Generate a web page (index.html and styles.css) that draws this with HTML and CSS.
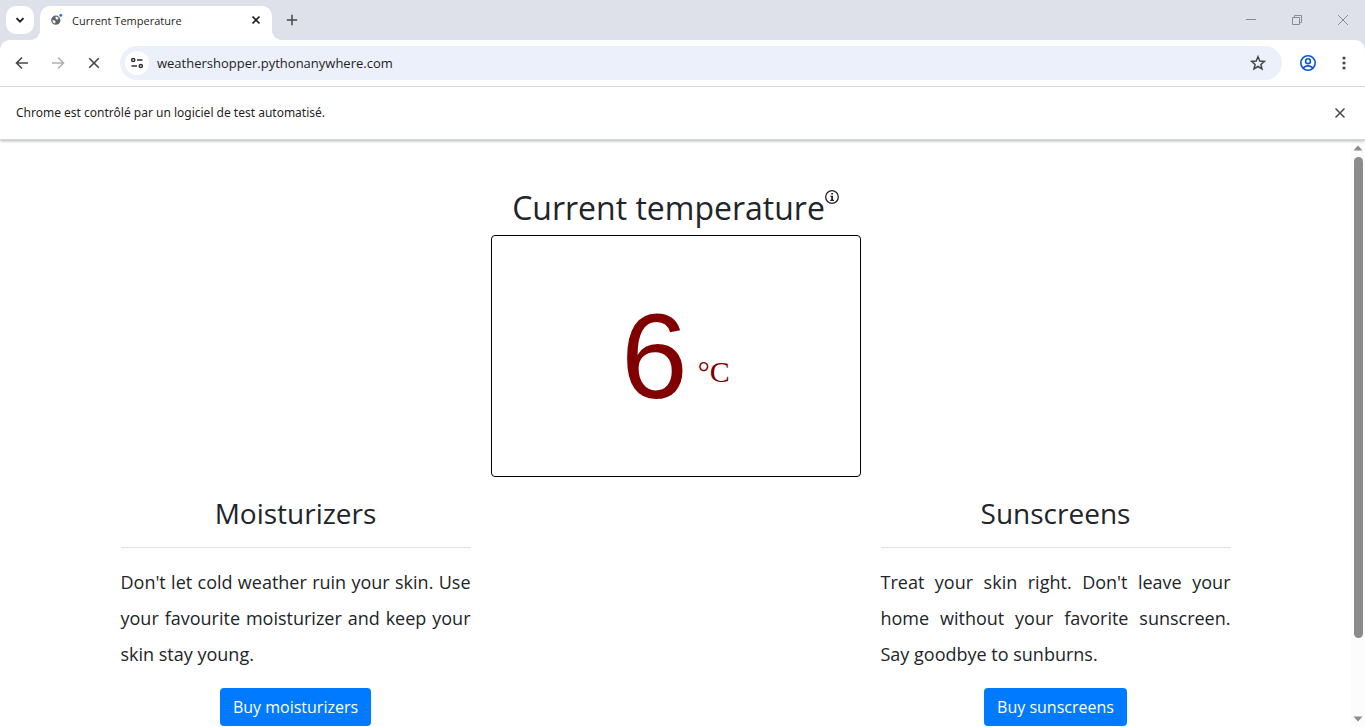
FILE: index.html
```html
<!DOCTYPE html>
<html lang="en">
<head>
<meta charset="utf-8">
<title>Current Temperature</title>
<link rel="stylesheet" href="styles.css">
</head>
<body>
<div class="window">
  <header class="tabstrip">
    <button class="tab-search" aria-label="Search tabs"><svg width="12" height="12" viewBox="0 0 12 12"><path d="M2.500 4.200 6 7.700 9.500 4.200" fill="none" stroke="#1f1f1f" stroke-width="1.900"/></svg></button>
    <div class="tab">
      <svg class="favicon" width="14" height="14" viewBox="0 0 14 14"><circle cx="5.800" cy="7.200" r="4.600" fill="#5f6368"/><path d="M2.400 7.300c1.500-.4 2.600 0 3.100 1 .4 1-.3 1.500-.8 2.300C3.200 10 2.400 8.700 2.400 7.300zM5.300 4c1.300-.6 2.600.1 3.300 1.200L7.300 6.700 6 6.200z" fill="#fff"/><circle cx="10.800" cy="2.400" r="2" fill="#fff"/><circle cx="10.800" cy="2.400" r="1.400" fill="#1a6ee8"/></svg>
      <span class="tab-title">Current Temperature</span>
      <button class="icon-button" aria-label="Close tab"><svg width="10" height="10" viewBox="0 0 10 10"><path d="M1.500 1.500 8.500 8.500M8.500 1.500 1.500 8.500" stroke="#1f1f1f" stroke-width="1.700"/></svg></button>
    </div>
    <button class="icon-button new-tab" aria-label="New tab"><svg width="12" height="12" viewBox="0 0 12 12"><path d="M6 .8V11.200M.8 6H11.200" stroke="#474747" stroke-width="1.500"/></svg></button>
    <div class="window-controls">
      <button class="icon-button" aria-label="Minimize"><svg width="12" height="12" viewBox="0 0 12 12"><path d="M1 5.500H11" stroke="#8a8c90"/></svg></button>
      <button class="icon-button" aria-label="Restore"><svg width="12" height="12" viewBox="0 0 12 12"><path d="M1.500 3.500H8.500V10.500H1.500zM3.500 3.500V1.500H10.500V8.500H8.500" fill="none" stroke="#8a8c90"/></svg></button>
      <button class="icon-button" aria-label="Close window"><svg width="12" height="12" viewBox="0 0 12 12"><path d="M1 1 11 11M11 1 1 11" stroke="#8a8c90"/></svg></button>
    </div>
  </header>
  <nav class="toolbar" aria-label="Browser">
    <button class="icon-button tool" aria-label="Back"><svg width="14" height="14" viewBox="0 0 14 14"><path d="M13 7H2M7 1.500 1.500 7 7 12.500" fill="none" stroke="#474747" stroke-width="1.600"/></svg></button>
    <button class="icon-button tool" aria-label="Forward"><svg width="14" height="14" viewBox="0 0 14 14"><path d="M1 7H12M7 1.500 12.500 7 7 12.500" fill="none" stroke="#b0b0b0" stroke-width="1.600"/></svg></button>
    <button class="icon-button tool" aria-label="Stop loading"><svg width="14" height="14" viewBox="0 0 14 14"><path d="M2.200 2.200 11.800 11.800M11.800 2.200 2.200 11.800" stroke="#474747" stroke-width="1.600"/></svg></button>
    <div class="omnibox">
      <button class="icon-button site-info" aria-label="Site information"><svg width="14" height="14" viewBox="0 0 14 14"><path d="M7 4H12.500M1.500 10H7" stroke="#303030" stroke-width="1.600"/><g fill="none" stroke="#303030" stroke-width="1.500"><circle cx="3.200" cy="4" r="1.600"/><circle cx="10.800" cy="10" r="1.600"/></g></svg></button>
      <input class="url" aria-label="Address" value="weathershopper.pythonanywhere.com">
      <button class="icon-button tool" aria-label="Bookmark"><svg width="16" height="16" viewBox="0 0 16 16"><path d="M8 1.700 9.800 6 14.400 6.400 10.900 9.400 12 14 8 11.500 4 14 5.100 9.400 1.600 6.400 6.200 6z" fill="none" stroke="#474747" stroke-width="1.500"/></svg></button>
    </div>
    <button class="icon-button profile" aria-label="Profile"><svg width="18" height="18" viewBox="0 0 18 18"><g fill="none" stroke="#0b57d0" stroke-width="1.600"><circle cx="9" cy="9" r="7.200"/><circle cx="9" cy="7.200" r="2.400"/><path d="M4 14Q9 9.600 14 14"/></g></svg></button>
    <button class="icon-button menu" aria-label="Menu"><svg width="4" height="16" viewBox="0 0 4 16"><g fill="#474747"><circle cx="2" cy="3" r="1.600"/><circle cx="2" cy="8" r="1.600"/><circle cx="2" cy="13" r="1.600"/></g></svg></button>
  </nav>
  <div class="infobar" role="status">
    <span>Chrome est contrôlé par un logiciel de test automatisé.</span>
    <button class="icon-button menu" aria-label="Fermer"><svg width="12" height="12" viewBox="0 0 12 12"><path d="M1.500 1.500 10.500 10.500M10.500 1.500 1.500 10.500" stroke="#474747" stroke-width="1.500"/></svg></button>
  </div>
  <div class="viewport">
    <main class="page">
      <section class="temperature">
        <h2 class="title">Current temperature<button class="info" aria-label="Information"><svg width="14" height="14" viewBox="0 0 14 14"><circle cx="7" cy="7" r="6.300" fill="none" stroke="#212529" stroke-width="1.300"/><path d="M6.200 3H8V4.600H6.200zM5.200 5.700H8V9.800H9V10.900H5.200V9.800H6.200V6.800H5.200z" fill="#212529"/></svg></button></h2>
        <div class="reading"><span class="degrees">6</span><span class="unit">°C</span></div>
      </section>
      <div class="products">
        <section class="product">
          <h3 class="product-title">Moisturizers</h3>
          <hr class="rule">
          <p class="copy">Don't let cold weather ruin your skin. Use your favourite moisturizer and keep your skin stay young.</p>
          <button class="buy">Buy moisturizers</button>
        </section>
        <section class="product">
          <h3 class="product-title">Sunscreens</h3>
          <hr class="rule">
          <p class="copy">Treat your skin right. Don't leave your home without your favorite sunscreen. Say goodbye to sunburns.</p>
          <button class="buy">Buy sunscreens</button>
        </section>
      </div>
    </main>
    <div class="scrollbar" aria-hidden="true">
      <svg width="10" height="6" viewBox="0 0 10 6"><path d="M.5 5.500 5 .5 9.500 5.500z" fill="#8b8b8b"/></svg>
      <div class="track"><div class="thumb"></div></div>
      <svg width="10" height="6" viewBox="0 0 10 6"><path d="M.5 .5 5 5.500 9.500 .5z" fill="#8b8b8b"/></svg>
    </div>
  </div>
</div>
</body>
</html>
```
FILE: styles.css
```css
* { box-sizing: border-box; }
body { margin: 0; background: #fff; color: #212529; font-family: "Open Sans", "Noto Sans", sans-serif; }
button { font: inherit; cursor: pointer; }
svg { display: block; }
.window { display: flex; flex-direction: column; height: 100vh; overflow: hidden; }

.icon-button { display: flex; align-items: center; justify-content: center; padding: 0; border: 0; background: none; width: 20px; height: 20px; flex: none; }
.tabstrip { display: flex; align-items: center; height: 40px; flex: none; background: #dee1e9; padding-left: 6px; font-size: 11px; box-shadow: 0 10px 0 #dee1e9; }
.tab-search { display: flex; align-items: center; justify-content: center; width: 28px; height: 28px; padding: 0; border: 0; border-radius: 10px; background: #fff; }
.tab { position: relative; display: flex; align-items: center; gap: 8px; width: 232px; height: 34px; margin-left: 6px; align-self: flex-end; padding: 0 6px 6px 10px; border-radius: 10px 10px 0 0; background: #fff; color: #1f1f1f; }
.tab::before, .tab::after { content: ""; position: absolute; bottom: 0; width: 10px; height: 10px; }
.tab::before { left: -10px; background: radial-gradient(circle at 0 0, transparent 10px, #fff 10px); }
.tab::after { right: -10px; background: radial-gradient(circle at 100% 0, transparent 10px, #fff 10px); }
.tab-title { flex: 1; }
.new-tab { margin-left: 10px; }
.window-controls { display: flex; gap: 26px; margin-left: auto; padding-right: 12px; }

.toolbar { position: relative; display: flex; align-items: center; gap: 16px; height: 47px; flex: none; padding: 0 11px 0 12px; background: #fff; border-bottom: 1px solid #e0e2e2; border-radius: 10px 10px 0 0; }
.omnibox { display: flex; align-items: center; flex: 1; height: 34px; border-radius: 17px; background: #ebf0fa; padding: 0 14px 0 5px; gap: 8px; }
.site-info { width: 24px; height: 24px; border-radius: 12px; background: #fff; }
.url { flex: 1; min-width: 0; padding: 0; border: 0; outline: 0; background: none; color: #1f1f1f; font: 13px/20px "Open Sans", "Noto Sans", sans-serif; }
.infobar { position: relative; z-index: 1; display: flex; align-items: center; justify-content: space-between; height: 53px; flex: none; padding: 0 15px 0 16px; background: #fff; color: #1f1f1f; font: 12px/18px "Noto Sans", "Open Sans", sans-serif; border-bottom: 1px solid #d5d8d7; box-shadow: 0 1px 3px #aeb2b0; }

.viewport { display: flex; flex: 1; min-height: 0; overflow: hidden; }
.page { flex: 1; padding-top: 49px; }
.temperature { display: flex; flex-direction: column; align-items: center; }
.title { display: flex; margin: 0 0 8px; font-size: 32px; line-height: 38px; font-weight: 400; }
.info { width: 14px; height: 16px; padding: 0; border: 0; background: none; }
.reading { display: flex; align-items: center; justify-content: center; gap: 10px; width: 370px; height: 242px; border: 1px solid #000; border-radius: 4px; color: #800000; }
.degrees { font: 120px/240px "Liberation Sans", Arial, sans-serif; }
.unit { padding-top: 32px; font: 30px/36px "Liberation Serif", serif; }
.products { display: flex; justify-content: space-between; max-width: 1140px; margin: 0 auto; padding: 20px 15px 0; }
.product { width: 350px; text-align: center; }
.product-title { margin: 0; font-size: 28px; line-height: 32px; font-weight: 400; }
.rule { margin: 18px 0 16px; border: 0; border-top: 1px solid #e0e0e0; }
.copy { margin: 0 0 16px; font-size: 18px; line-height: 36px; text-align: justify; }
.buy { height: 38px; padding: 0 13px; border: 0; border-radius: 4px; background: #007bff; color: #fff; font-size: 16px; }
.scrollbar { display: flex; flex-direction: column; align-items: center; gap: 6px; width: 14px; padding: 5px 0; background: #fcfcfc; }
.track { flex: 1; width: 9px; }
.thumb { height: 87%; border-radius: 5px; background: #8b8b8b; }
```
